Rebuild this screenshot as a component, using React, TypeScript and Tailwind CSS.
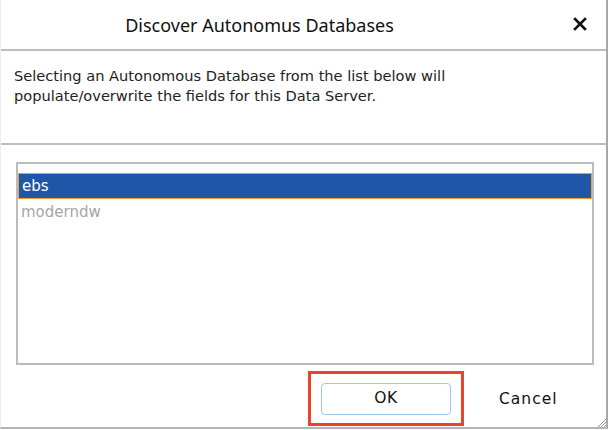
import React from "react";

export default function App() {
  return (
    <div className="w-[610px] h-[430px] bg-white relative overflow-hidden" style={{ fontFamily: '"DejaVu Sans", sans-serif' }}>
      <div className="w-[608px] h-[429px] border-r-2 border-b-2 border-l border-r-[#a8a8a8] border-b-[#b4b4b4] border-l-[#ececec] flex flex-col">
        {/* Title bar */}
        <div className="h-[51px] flex items-center border-b-2 border-[#bdbdbd] relative shrink-0">
          <div className="flex-1 text-center text-[18px] text-[#111] pr-[88px] pt-[1px]" style={{ fontFamily: '"Noto Sans", sans-serif' }}>
            Discover Autonomus Databases
          </div>
          <svg className="absolute left-[572px] top-[17px]" width="14" height="14" viewBox="0 0 14 14">
            <path d="M2 2 L12 12 M12 2 L2 12" stroke="#111" strokeWidth="2.6" strokeLinecap="square" />
          </svg>
        </div>
        {/* Description */}
        <div className="h-[94px] border-b-2 border-[#bdbdbd] pl-[13px] pt-[15px] text-[14.6px] leading-[20px] text-[#222] shrink-0">
          Selecting an Autonomous Database from the list below will
          <br />
          populate/overwrite the fields for this Data Server.
        </div>
        {/* List */}
        <div className="flex-1 flex flex-col">
          <div className="mt-[17px] ml-[15px] w-[578px] h-[203px] border-2 border-[#bcbcbc] pt-[9px]">
            <div className="h-[26px] bg-[#1f56a8] border border-[#f0a030] text-white text-[15px] leading-[24px] pl-[3px]">ebs</div>
            <div className="h-[26px] text-[#a6a6a6] text-[15px] leading-[26px] pl-[3px]">moderndw</div>
          </div>
          {/* Buttons */}
          <div className="flex items-start mt-[6px]">
            <div className="ml-[307px] w-[156px] h-[55px] border-[3px] border-[#e8452b] flex items-center justify-center">
              <div className="w-[130px] h-[32px] rounded-[4px] border border-[#9cc8f0] bg-white flex items-center justify-center text-[15.5px] text-[#111] tracking-[0.5px]">
                OK
              </div>
            </div>
            <div className="ml-[35px] mt-[17px] text-[15.5px] text-[#111] tracking-[1px]">Cancel</div>
          </div>
        </div>
      </div>
      {/* resize grip */}
      <svg className="absolute right-[3px] bottom-[2px]" width="10" height="10" viewBox="0 0 10 10">
        <path d="M9 1 L1 9 M9 4 L4 9 M9 7 L7 9" stroke="#9a9a9a" strokeWidth="1" />
      </svg>
    </div>
  );
}
